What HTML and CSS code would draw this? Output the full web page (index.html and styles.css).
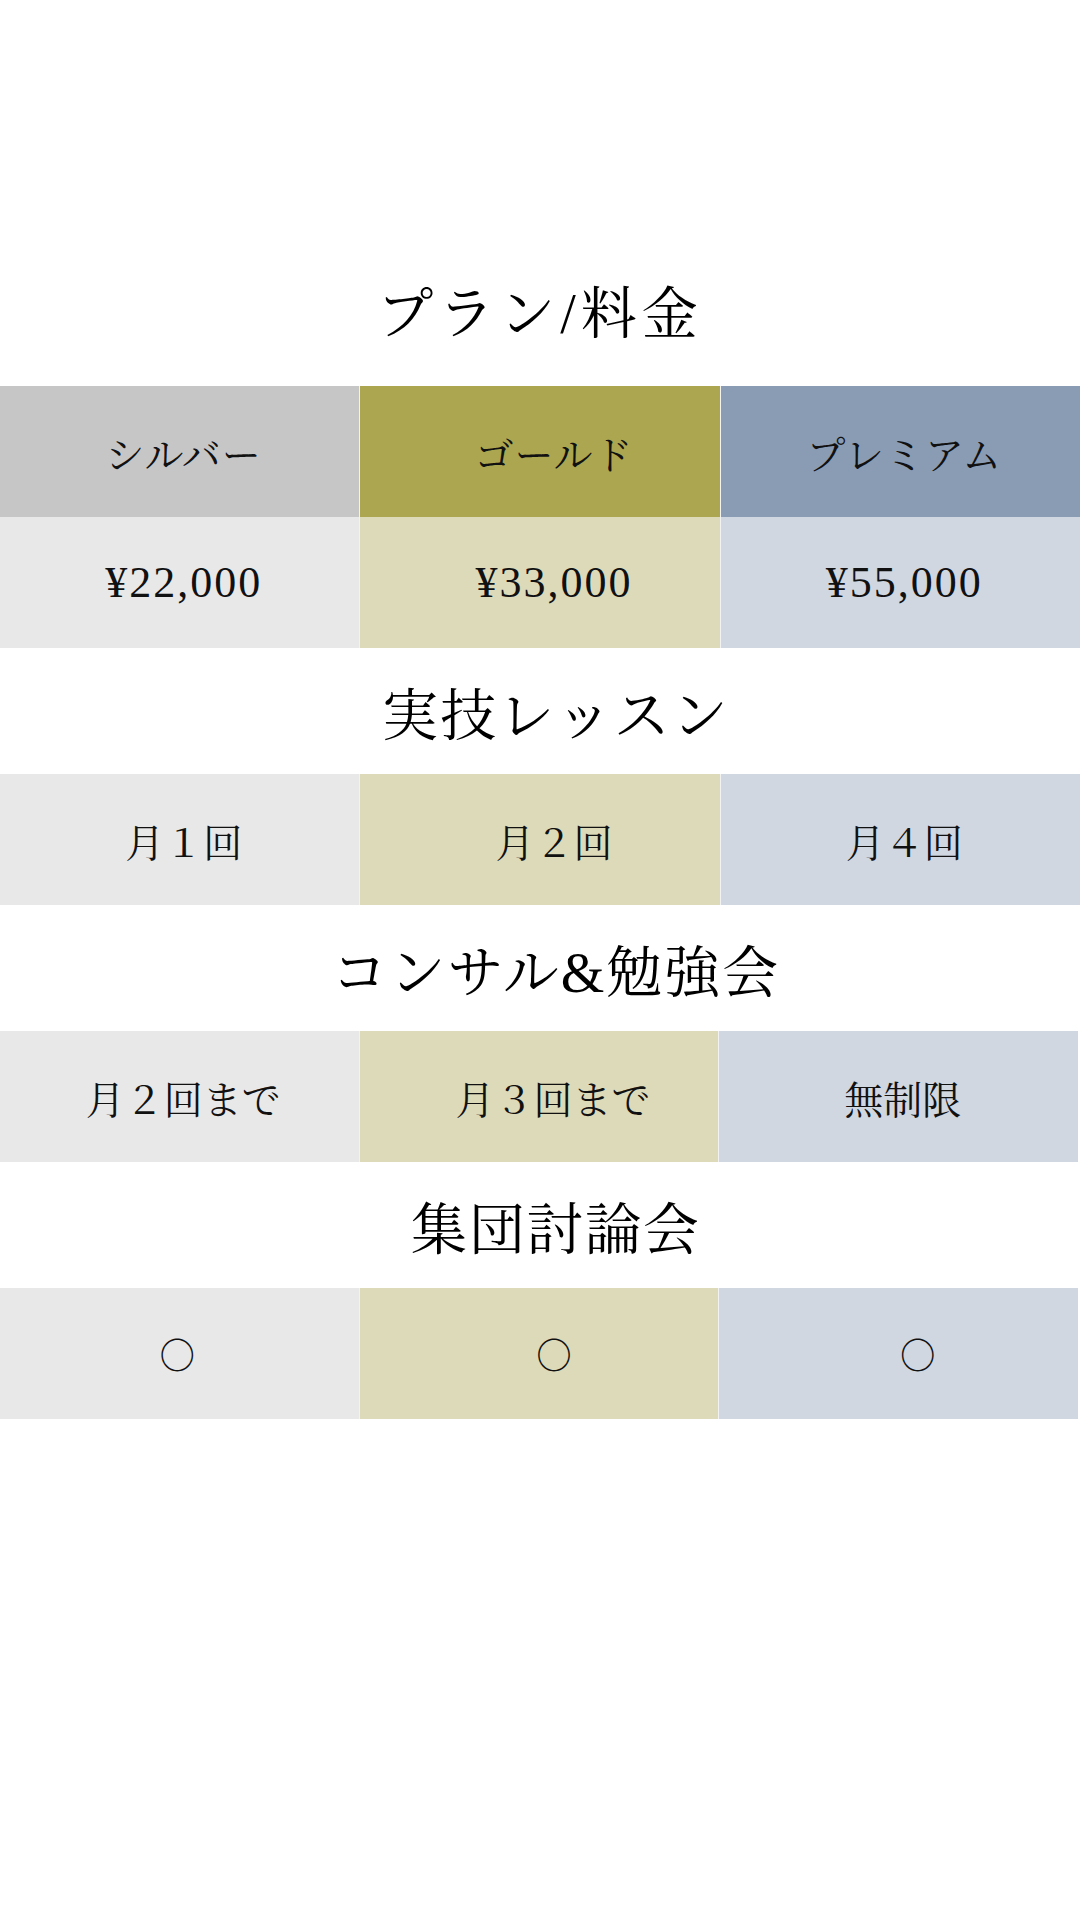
FILE: index.html
```html
<!DOCTYPE html>
<html>
	<head>
		<meta charset="UTF-8">
		<title>プラン/料金</title>
		<link rel="stylesheet" href="styles.css">
	</head>
	<body>
		<div class="wrap">
			<div class="heading heading-first">プラン/料金</div>
			<div class="row row-head">
				<div class="cell silver">シルバー</div>
				<div class="cell gold">ゴールド</div>
				<div class="cell premium">プレミアム</div>
			</div>
			<div class="row">
				<div class="cell silver-light price">¥22,000</div>
				<div class="cell gold-light price">¥33,000</div>
				<div class="cell premium-light price">¥55,000</div>
			</div>

			<div class="heading">実技レッスン</div>
			<div class="row">
				<div class="cell silver-light">月１回</div>
				<div class="cell gold-light">月２回</div>
				<div class="cell premium-light">月４回</div>
			</div>

			<div class="heading">コンサル&amp;勉強会</div>
			<div class="row row-narrow">
				<div class="cell silver-light">月２回まで</div>
				<div class="cell gold-light">月３回まで</div>
				<div class="cell premium-light">無制限</div>
			</div>

			<div class="heading">集団討論会</div>
			<div class="row row-narrow row-mark">
				<div class="cell silver-light">○</div>
				<div class="cell gold-light">○</div>
				<div class="cell premium-light">○</div>
			</div>
		</div>
	</body>
</html>
```

FILE: styles.css
```css
*{
	margin: 0;
	padding: 0;
	box-sizing: border-box;
}
body{
	background-color: #fff;
	color: #000;
	font-family: "Liberation Serif", "Noto Serif CJK JP", "Noto Sans CJK JP", serif;
}
.wrap{
	width: 1080px;
	padding-top: 246px;
}
/* 見出し */
.heading{
	height: 126px;
	display: flex;
	align-items: center;
	justify-content: center;
	padding-left: 32px;
	font-size: 56px;
	font-weight: normal;
	letter-spacing: 2px;
}
.heading-first{
	padding-left: 0;
	margin-bottom: 14px;
	letter-spacing: 5px;
}
/* 表の行 */
.row{
	display: grid;
	grid-template-columns: repeat(3, 1fr);
	column-gap: 1px;
	background-color: #f2f2f2;
}
.row-narrow{
	width: 1078px;
}
.cell{
	height: 131px;
	display: flex;
	align-items: center;
	justify-content: center;
	font-size: 39px;
	color: #111;
}
.cell:nth-child(1){
	padding-left: 8px;
}
.cell:nth-child(2){
	padding-left: 28px;
}
.cell:nth-child(3){
	padding-left: 8px;
}
.row-head .cell{
	letter-spacing: 1px;
}
.price{
	font-size: 44px;
	letter-spacing: 2px;
}
/* ○の行 */
.row-mark .cell{
	font-family: "Noto Serif CJK JP", "Noto Sans CJK JP", serif;
	font-size: 36px;
}
.row-mark .cell:nth-child(1){
	padding-left: 0;
	padding-right: 4px;
}
.row-mark .cell:nth-child(2){
	padding-left: 30px;
}
.row-mark .cell:nth-child(3){
	padding-left: 38px;
}
.silver{
	background-color: #c6c6c6;
}
.gold{
	background-color: #aba64f;
}
.premium{
	background-color: #8a9cb4;
}
.silver-light{
	background-color: #e8e8e8;
}
.gold-light{
	background-color: #dddab9;
}
.premium-light{
	background-color: #d0d7e1;
}
```
